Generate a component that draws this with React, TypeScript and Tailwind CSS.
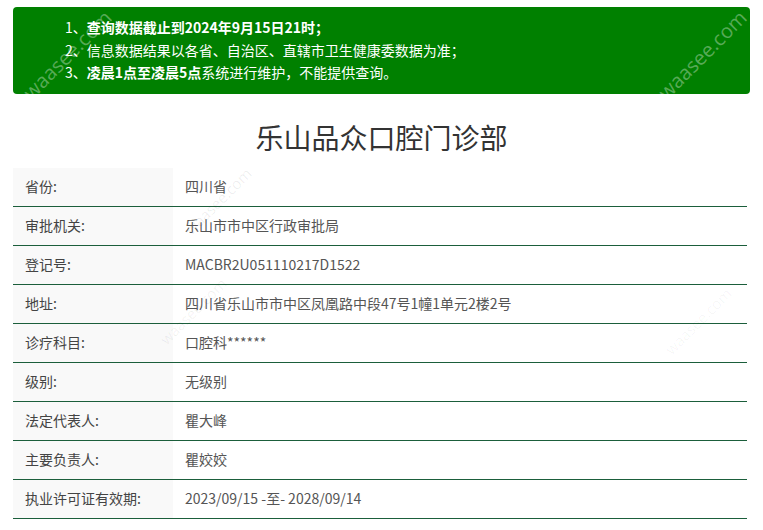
import React from "react";

interface Row {
  label: string;
  value: string;
}

const rows: Row[] = [
  { label: "省份:", value: "四川省" },
  { label: "审批机关:", value: "乐山市市中区行政审批局" },
  { label: "登记号:", value: "MACBR2U051110217D1522" },
  { label: "地址:", value: "四川省乐山市市中区凤凰路中段47号1幢1单元2楼2号" },
  { label: "诊疗科目:", value: "口腔科******" },
  { label: "级别:", value: "无级别" },
  { label: "法定代表人:", value: "瞿大峰" },
  { label: "主要负责人:", value: "瞿姣姣" },
  { label: "执业许可证有效期:", value: "2023/09/15 -至- 2028/09/14" },
];

// faint site stamps laid over the page
const marks = [
  { cls: "left-[10px] top-[40px] text-[20px] text-white/35" },
  { cls: "left-[645px] top-[40px] text-[20px] text-white/35" },
  { cls: "left-[175px] top-[190px] text-[15px] text-black/[0.07]" },
  { cls: "left-[150px] top-[300px] text-[15px] text-black/[0.06]" },
  { cls: "left-[655px] top-[310px] text-[15px] text-black/[0.04]" },
];

export default function App() {
  return (
    <div
      className="relative min-h-[530px] w-[763px] overflow-hidden bg-white px-[13px] pt-[7px]"
      style={{ fontFamily: '"Noto Sans CJK SC", "Noto Sans", sans-serif' }}
    >
      <div className="rounded-[4px] bg-[#008000] pb-[10px] pl-[52px] pt-[9px] text-[14px] leading-[22.5px] text-white">
        <p>
          1、<span className="font-bold">查询数据截止到2024年9月15日21时；</span>
        </p>
        <p>2、信息数据结果以各省、自治区、直辖市卫生健康委数据为准；</p>
        <p>
          3、<span className="font-bold">凌晨1点至凌晨5点</span>系统进行维护，不能提供查询。
        </p>
      </div>

      <h1 className="mt-[23px] text-center text-[28px] leading-[40px] text-[#333]">
        乐山品众口腔门诊部
      </h1>

      <div className="mt-[11px] w-[734px] text-[14px]">
        {rows.map((row) => (
          <div
            key={row.label}
            className="flex h-[39px] border-b border-[#1b5e3b]"
          >
            <div className="flex w-[160px] items-center bg-[#f9f9f9] pl-[12px] text-[#444]">
              {row.label}
            </div>
            <div className="flex flex-1 items-center pl-[12px] text-[#555]">
              {row.value}
            </div>
          </div>
        ))}
      </div>

      {marks.map((m, i) => (
        <span
          key={i}
          className={`pointer-events-none absolute -rotate-45 select-none ${m.cls}`}
          style={{ fontFamily: '"Open Sans", sans-serif' }}
        >
          waasee.com
        </span>
      ))}
    </div>
  );
}
